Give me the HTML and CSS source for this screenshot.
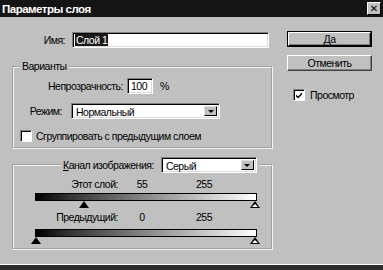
FILE: index.html
```html
<!DOCTYPE html>
<html lang="ru">
<head>
<meta charset="utf-8">
<title>Параметры слоя</title>
<link rel="stylesheet" href="styles.css">
</head>
<body>
<div class="window">
  <div class="titlebar">
    <span class="title">Параметры слоя</span>
    <span class="close">✕</span>
  </div>
  <div class="content">
    <div class="main">
      <div class="name-row">
        <label class="name-label">Имя:</label>
        <div class="sunken name-input"><span class="selected">Слой 1</span></div>
      </div>

      <fieldset class="group options">
        <legend>Варианты</legend>
        <div class="opacity-row">
          <label class="opacity-label">Непрозрачность:</label>
          <div class="sunken opacity-input">100</div>
          <span class="percent">%</span>
        </div>
        <div class="mode-row">
          <label class="mode-label">Режим:</label>
          <div class="sunken select mode-select">
            <span class="select-text">Нормальный</span>
            <span class="arrow-btn"><span class="arrow"></span></span>
          </div>
        </div>
        <div class="check-row">
          <span class="checkbox"></span>
          <span class="check-label">Сгруппировать с предыдущим слоем</span>
        </div>
      </fieldset>

      <fieldset class="group blend">
        <legend class="channel-legend">
          <label class="channel-label"><u>К</u>анал изображения:</label>
          <div class="sunken select channel-select">
            <span class="select-text">Серый</span>
            <span class="arrow-btn"><span class="arrow"></span></span>
          </div>
        </legend>
        <div class="values-row first">
          <span class="val-label">Этот слой:</span>
          <span class="val-min">55</span>
          <span class="val-max">255</span>
        </div>
        <div class="slider first-slider">
          <div class="bar"></div>
          <span class="marker dark" style="left:44px"></span>
          <span class="marker light" style="left:215px"></span>
        </div>
        <div class="values-row second">
          <span class="val-label">Предыдущий:</span>
          <span class="val-min">0</span>
          <span class="val-max">255</span>
        </div>
        <div class="slider second-slider">
          <div class="bar"></div>
          <span class="marker dark" style="left:-4px"></span>
          <span class="marker light" style="left:215px"></span>
        </div>
      </fieldset>
    </div>

    <div class="side">
      <div class="button default-btn"><span class="btn-face">Да</span></div>
      <div class="button cancel-btn"><span class="btn-face">Отменить</span></div>
      <div class="preview-row">
        <span class="checkbox checked">
          <svg viewBox="0 0 8 8" width="8" height="8"><path d="M1 3.5 L3 5.5 L7 1.5 L7 3.5 L3 7.5 L1 5.5 Z" fill="#000"/></svg>
        </span>
        <span class="check-label">Просмотр</span>
      </div>
    </div>
  </div>
</div>
</body>
</html>
```
FILE: styles.css
```css
html, body {
  margin: 0;
  padding: 0;
  background: #2e2e2e;
}

.window {
  width: 383px;
  height: 265px;
  background: #c0c0c0;
  border-bottom: 1px solid #ffffff;
  box-sizing: border-box;
  font-family: "Liberation Sans", Arial, sans-serif;
  font-size: 10.5px;
  letter-spacing: -0.5px;
  color: #000;
  display: flex;
  flex-direction: column;
  overflow: hidden;
}

.titlebar {
  height: 17px;
  flex: none;
  background: #151515;
  display: flex;
  align-items: center;
  justify-content: space-between;
  padding: 0 2px 0 2px;
}

.title {
  color: #fff;
  font-weight: bold;
  font-size: 11.5px;
  letter-spacing: -0.5px;
}

.close {
  width: 14px;
  height: 13px;
  box-sizing: border-box;
  background: #c0c0c0;
  border: 1px solid;
  border-color: #fff #000 #000 #fff;
  display: flex;
  align-items: center;
  justify-content: center;
  font-family: "DejaVu Sans", sans-serif;
  font-size: 10px;
  font-weight: bold;
  letter-spacing: 0;
  line-height: 1;
  color: #000;
}

.content {
  display: flex;
  flex: 1;
}

.main {
  width: 261px;
  margin-left: 12px;
  display: flex;
  flex-direction: column;
}

.side {
  margin-left: 14px;
  width: 85px;
  display: flex;
  flex-direction: column;
}

/* sunken fields */
.sunken {
  box-sizing: border-box;
  background: #fff;
  border: 1px solid;
  border-color: #808080 #fff #fff #808080;
  box-shadow: inset 1px 1px 0 #000, inset -1px -1px 0 #dcdcdc;
}

.name-row {
  margin-top: 15px;
  display: flex;
  align-items: center;
}

.name-label {
  width: 53px;
  margin-right: 7px;
  text-align: right;
}

.name-input {
  width: 197px;
  height: 16px;
  padding: 1px 0 0 2px;
  line-height: 12px;
}

.selected {
  background: #1a1a1a;
  color: #fff;
  padding: 0 1px;
}

/* groups */
.group {
  margin: 0;
  padding: 0 0 0 0;
  border: 2px groove #f4f4f4;
  min-width: 0;
}

.group legend {
  padding: 0 2px;
  line-height: 13px;
}

.options {
  margin-top: 12px;
  padding-bottom: 5px;
}

.options legend {
  margin-left: 6px;
}

.opacity-row {
  margin-top: 5px;
  display: flex;
  align-items: center;
}

.opacity-label {
  width: 109px;
  text-align: right;
  margin-right: 4px;
}

.opacity-input {
  width: 26px;
  height: 16px;
  padding: 0 0 0 3px;
  line-height: 15px;
}

.percent {
  margin-left: 7px;
}

.mode-row {
  margin-top: 9px;
  display: flex;
  align-items: center;
}

.mode-label {
  width: 48px;
  margin-right: 9px;
  text-align: right;
}

.select {
  height: 16px;
  display: flex;
  align-items: stretch;
  justify-content: space-between;
  padding: 2px 2px 2px 4px;
}

.select-text {
  line-height: 12px;
}

.mode-select {
  width: 149px;
}

.arrow-btn {
  width: 13px;
  box-sizing: border-box;
  background: #c0c0c0;
  border: 1px solid;
  border-color: #dfdfdf #000 #000 #dfdfdf;
  display: flex;
  align-items: center;
  justify-content: center;
}

.arrow {
  width: 0;
  height: 0;
  border-left: 3px solid transparent;
  border-right: 3px solid transparent;
  border-top: 3px solid #000;
}

.check-row {
  margin-top: 11px;
  display: flex;
  align-items: center;
  margin-left: 6px;
}

.checkbox {
  width: 12px;
  height: 12px;
  box-sizing: border-box;
  background: #fff;
  border: 1px solid;
  border-color: #808080 #fff #fff #808080;
  box-shadow: inset 1px 1px 0 #000;
  display: flex;
  align-items: center;
  justify-content: center;
  flex: none;
}

.check-label {
  margin-left: 4px;
}

.blend {
  margin-top: 8px;
  padding-bottom: 4px;
}

.blend .channel-legend {
  margin-left: 47px;
  display: flex;
  align-items: center;
}

.channel-label {
  margin-right: 7px;
}

.channel-select {
  width: 96px;
}

.values-row {
  display: flex;
  line-height: 13px;
}

.values-row.first {
  margin-top: 5px;
}

.values-row.second {
  margin-top: 3px;
}

.val-label {
  width: 104px;
  text-align: right;
}

.val-min {
  width: 48px;
  text-align: center;
}

.val-max {
  margin-left: 30px;
}

.slider {
  position: relative;
  margin-left: 21px;
  width: 222px;
  height: 15px;
}

.first-slider {
  margin-top: 2px;
}

.second-slider {
  margin-top: 5px;
}

.bar {
  height: 8px;
  box-sizing: border-box;
  border: 1px solid #000;
  background: linear-gradient(to right, #000 0%, #333 15%, #888 50%, #fff 100%);
}

.marker {
  position: absolute;
  top: 8px;
  width: 0;
  height: 0;
  border-left: 5px solid transparent;
  border-right: 5px solid transparent;
  border-bottom: 7px solid #000;
}

.marker.light::after {
  content: "";
  position: absolute;
  left: -3px;
  top: 3px;
  border-left: 3px solid transparent;
  border-right: 3px solid transparent;
  border-bottom: 3px solid #fff;
}

/* buttons */
.button {
  height: 16px;
  box-sizing: border-box;
  display: flex;
}

.btn-face {
  flex: 1;
  background: #c0c0c0;
  border: 1px solid;
  border-color: #fff #404040 #404040 #fff;
  box-shadow: inset -1px -1px 0 #808080;
  display: flex;
  align-items: center;
  justify-content: center;
  line-height: 12px;
}

.default-btn {
  margin-top: 14px;
  border: 1px solid #000;
}

.default-btn .btn-face {
  border-color: #fff #000 #000 #fff;
}

.cancel-btn {
  margin-top: 8px;
}

.preview-row {
  margin-top: 18px;
  margin-left: 6px;
  display: flex;
  align-items: center;
}

.preview-row .check-label {
  margin-left: 5px;
}
```
